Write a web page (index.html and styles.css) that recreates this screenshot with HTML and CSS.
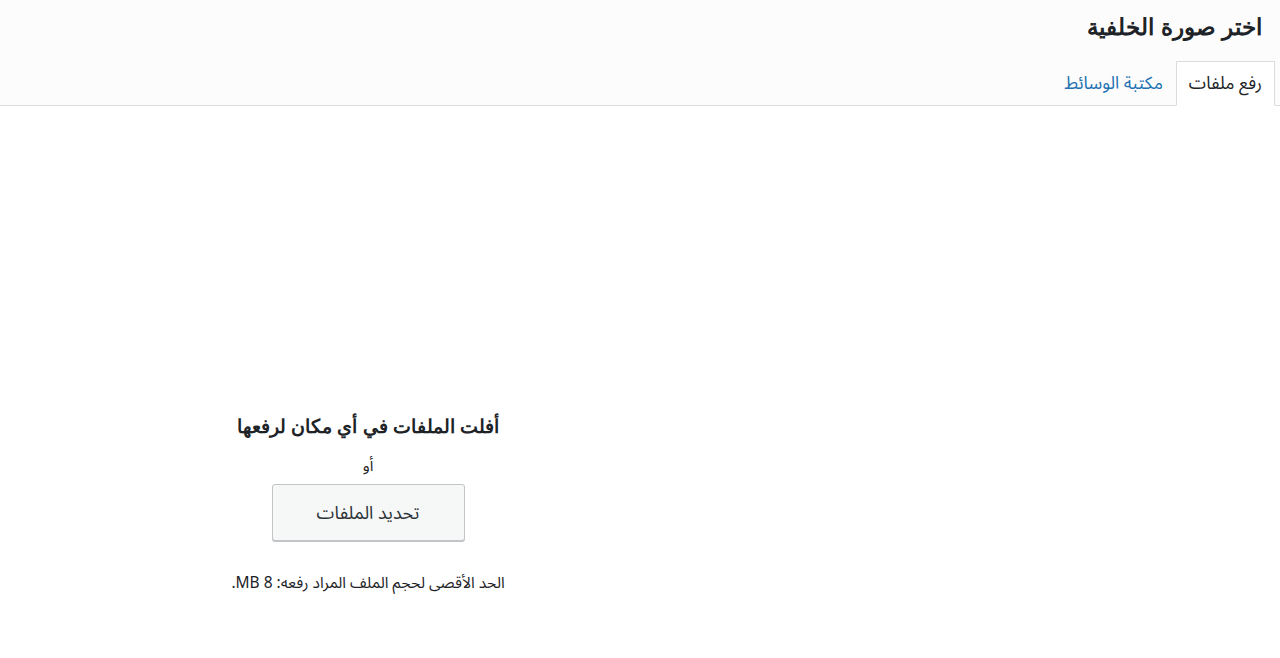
FILE: index.html
```html
<!DOCTYPE html>
<html lang="ar" dir="rtl">
<head>
<meta charset="utf-8">
<link rel="stylesheet" href="styles.css">
</head>
<body>
<div class="frame">
  <header class="frame-head">
    <h1 class="frame-title">اختر صورة الخلفية</h1>
    <nav class="tabs">
      <a class="tab tab-active">رفع ملفات</a>
      <a class="tab">مكتبة الوسائط</a>
    </nav>
  </header>
  <main class="frame-body">
    <div class="uploader">
      <h2 class="drop-title">أفلت الملفات في أي مكان لرفعها</h2>
      <p class="or">أو</p>
      <button class="select-btn">تحديد الملفات</button>
      <p class="max-size">الحد الأقصى لحجم الملف المراد رفعه: 8 MB.</p>
    </div>
  </main>
</div>
</body>
</html>
```
FILE: styles.css
```css
* { box-sizing: border-box; }
html, body { margin: 0; padding: 0; }
body {
  background: #fff;
  color: #1d2327;
  font-family: "Noto Sans Arabic", "DejaVu Sans", sans-serif;
  width: 1280px;
  height: 658px;
  overflow: hidden;
}
.frame-head {
  background: #fcfcfc;
  border-bottom: 1px solid #dcdcde;
  height: 106px;
  display: flex;
  flex-direction: column;
}
.frame-title {
  margin: 0;
  padding: 0 18px 0 0;
  height: 61px;
  line-height: 56px;
  font-family: "Liberation Sans", Arial, sans-serif;
  font-size: 22.6px;
  font-weight: bold;
  color: #1d2327;
}
.tabs {
  display: flex;
  padding-right: 5px;
  margin-bottom: -1px;
}
.tab {
  display: block;
  height: 45px;
  line-height: 44px;
  padding: 0 12px;
  font-size: 17.5px;
  color: #2271b1;
  border: 1px solid transparent;
  border-bottom: 0;
  text-decoration: none;
}
.tab-active {
  color: #1d2327;
  background: #fff;
  border-color: #dcdcde;
  border-bottom: 1px solid #fff;
}
.frame-body {
  display: flex;
  justify-content: flex-end;
}
.uploader {
  width: 736px;
  padding-top: 306px;
  display: flex;
  flex-direction: column;
  align-items: center;
  text-align: center;
}
.drop-title {
  margin: 0;
  font-family: "Liberation Sans", Arial, sans-serif;
  font-size: 19px;
  font-weight: bold;
  line-height: 30px;
}
.or {
  margin: 16px 0 0;
  font-size: 15.5px;
  line-height: 16px;
}
.select-btn {
  margin-top: 10px;
  width: 193px;
  height: 57px;
  background: #f6f7f7;
  border: 1px solid #c3c4c7;
  border-radius: 3px;
  box-shadow: 0 1px 0 #c3c4c7;
  font-family: inherit;
  font-size: 18px;
  color: #2c3338;
}
.max-size {
  margin: 34px 0 0;
  font-size: 15.5px;
  line-height: 16px;
}
```
